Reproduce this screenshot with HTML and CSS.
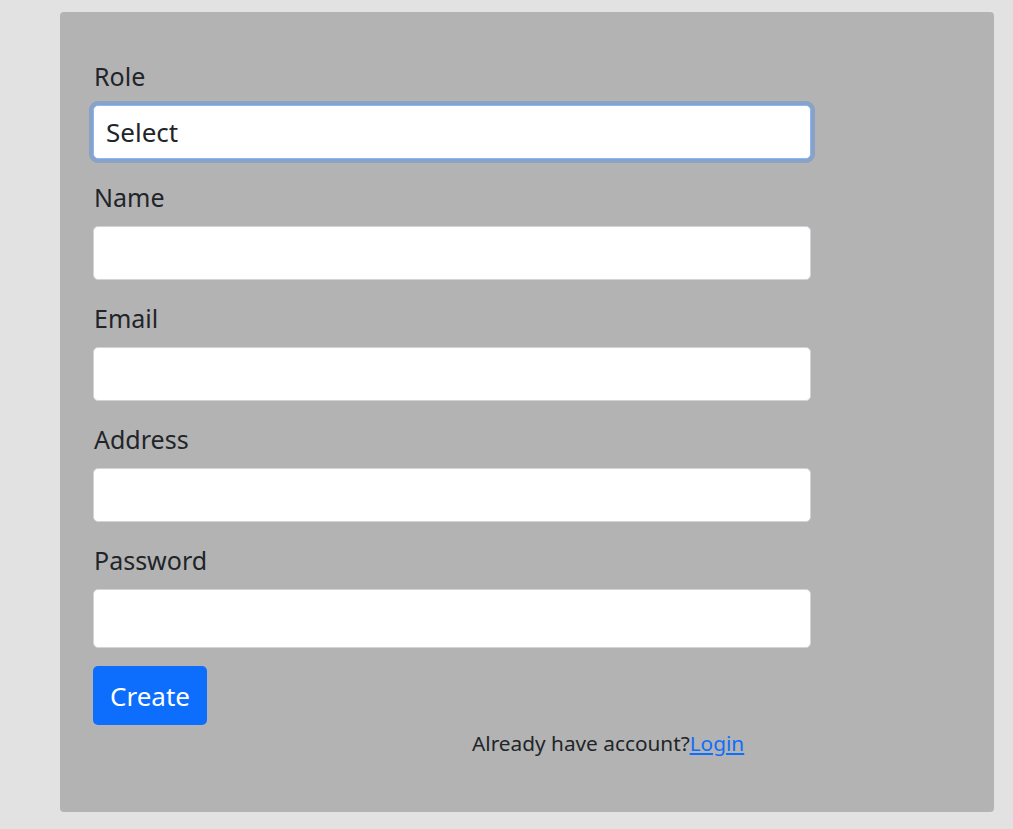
FILE: index.html
```html
<!DOCTYPE html>
<html lang="en">
<head>
<meta charset="utf-8">
<title>Register</title>
<link rel="stylesheet" href="styles.css">
</head>
<body>
<div class="card">
  <form class="form">
    <div class="field">
      <label class="label" for="role">Role</label>
      <select id="role" class="control control-focus"><option>Select</option></select>
    </div>
    <div class="field">
      <label class="label" for="name">Name</label>
      <input id="name" class="control" type="text">
    </div>
    <div class="field">
      <label class="label" for="email">Email</label>
      <input id="email" class="control" type="email">
    </div>
    <div class="field">
      <label class="label" for="address">Address</label>
      <input id="address" class="control" type="text">
    </div>
    <div class="field">
      <label class="label" for="password">Password</label>
      <input id="password" class="control control-tall" type="password">
    </div>
    <button type="button" class="btn">Create</button>
    <p class="login">Already have account?<a href="#" class="link">Login</a></p>
  </form>
</div>
</body>
</html>
```

FILE: styles.css
```css
html, body {
  margin: 0;
  padding: 0;
}
body {
  background: #e2e2e2;
  font-family: "Segoe UI", "Noto Sans", "Open Sans", sans-serif;
  color: #212529;
  padding: 12px 19px 0 60px;
  min-height: 829px;
  box-sizing: border-box;
}
.card {
  background: #b3b3b3;
  border-radius: 4px;
  height: 800px;
  box-sizing: border-box;
  padding: 46px 33px 0 33px;
}
.form {
  width: 718px;
  display: flex;
  flex-direction: column;
}
.field {
  display: flex;
  flex-direction: column;
  margin-bottom: 20px;
}
.label {
  font-size: 25px;
  line-height: 36px;
  margin-bottom: 11px;
  padding-left: 1px;
}
.control {
  height: 54px;
  box-sizing: border-box;
  background: #fff;
  border: 1px solid #ced4da;
  border-radius: 5px;
  font-family: inherit;
  font-size: 26px;
  color: #212529;
  padding: 0 12px;
  appearance: none;
  -webkit-appearance: none;
  outline: none;
}
.control-focus {
  border-color: #86b7fe;
  box-shadow: 0 0 0 4px rgba(13, 110, 253, 0.25);
}
.control-tall {
  height: 59px;
}
.field:last-of-type {
  margin-bottom: 18px;
}
.btn {
  align-self: flex-start;
  width: 114px;
  height: 59px;
  background: #0d6efd;
  color: #fff;
  border: none;
  border-radius: 5px;
  font-family: inherit;
  font-size: 26px;
  padding: 0;
}
.login {
  margin: 3px 0 0 379px;
  font-size: 20.8px;
  line-height: 30px;
}
.link {
  color: #0d6efd;
  text-decoration: underline;
}
```
